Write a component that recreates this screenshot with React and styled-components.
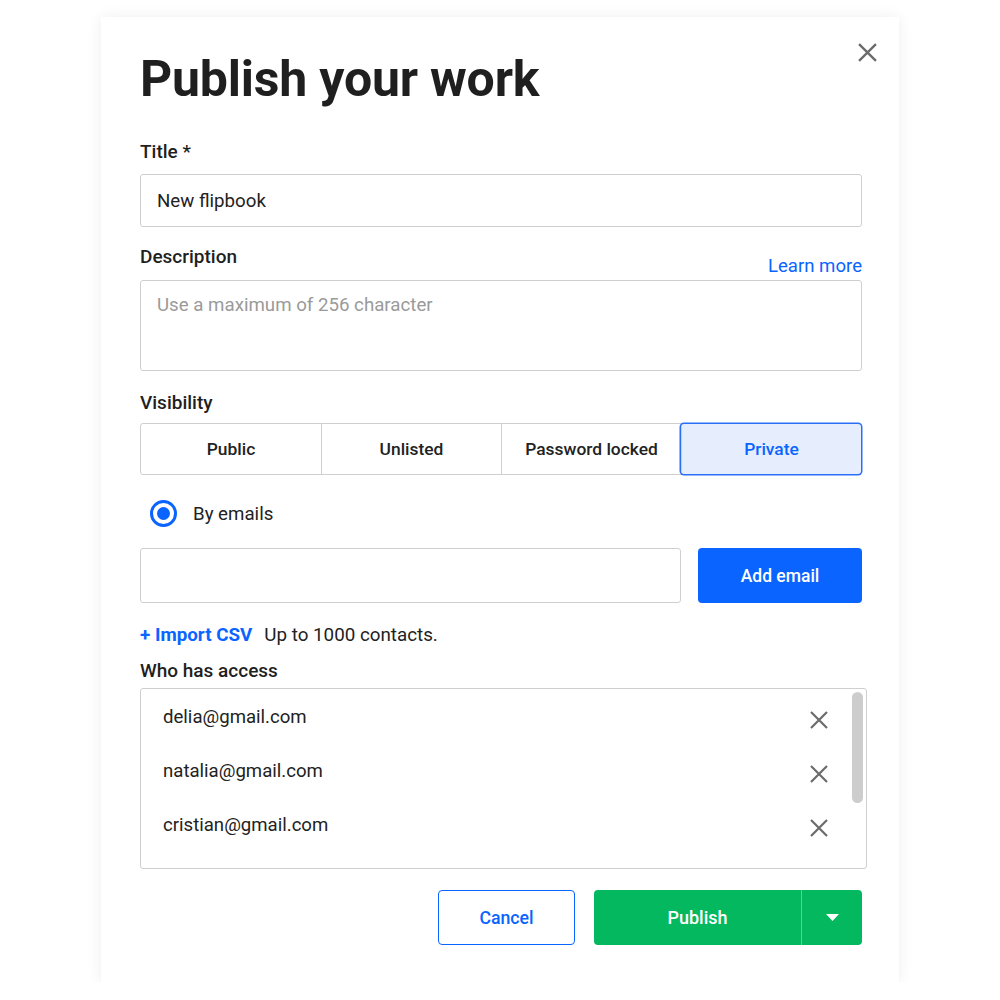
import React from "react";
import styled, { createGlobalStyle } from "styled-components";

const Global = createGlobalStyle`
  html, body { margin: 0; padding: 0; background: #ffffff; }
  body { font-family: Roboto, "Noto Sans", "Liberation Sans", sans-serif; color: #222; }
  * { box-sizing: border-box; }
`;

const BLUE = "#0a64ff";

const Page = styled.div`
  width: 1000px;
  display: flex;
  justify-content: center;
  padding-top: 17px;
`;

const Modal = styled.div`
  position: relative;
  width: 798px;
  height: 966px;
  background: #fff;
  box-shadow: 0 0 14px rgba(0, 0, 0, 0.07);
  padding: 35px 37px 0 39px;
  display: flex;
  flex-direction: column;
`;

const CloseButton = styled.button`
  position: absolute;
  top: 24px;
  right: 21px;
  width: 22px;
  height: 22px;
  padding: 0;
  border: none;
  background: none;
  display: flex;
  align-items: center;
  justify-content: center;
`;

const Heading = styled.h1`
  margin: 0;
  font-size: 50px;
  line-height: 55px;
  font-weight: 700;
  color: #1f1f1f;
  letter-spacing: -0.2px;
`;

const Label = styled.div`
  font-size: 19px;
  line-height: 24px;
  font-weight: 500;
  color: #1f1f1f;
  margin-top: ${(p) => p.$mt || 0}px;
  margin-bottom: ${(p) => (p.$mb === undefined ? 10 : p.$mb)}px;
`;

const TextInput = styled.div`
  height: ${(p) => p.$h || 53}px;
  width: ${(p) => (p.$w ? p.$w + "px" : "100%")};
  border: 1.5px solid #cfcfcf;
  border-radius: 3px;
  padding: ${(p) => (p.$top ? "12px 16px" : "0 16px")};
  display: flex;
  align-items: ${(p) => (p.$top ? "flex-start" : "center")};
  font-size: 18.7px;
  line-height: 24px;
  color: ${(p) => (p.$placeholder ? "#9a9a9a" : "#222")};
  flex-shrink: 0;
`;

const DescRow = styled.div`
  margin-top: 18px;
  display: flex;
  justify-content: space-between;
  align-items: flex-end;
  margin-bottom: 2px;
`;

const Link = styled.a`
  font-size: 18.6px;
  line-height: 24px;
  color: ${BLUE};
  text-decoration: none;
`;

const Segmented = styled.div`
  display: grid;
  grid-template-columns: repeat(4, 1fr);
  height: 52px;
  border: 1px solid #cfcfcf;
  border-radius: 3px;
`;

const Segment = styled.div`
  display: flex;
  align-items: center;
  justify-content: center;
  font-size: 17.4px;
  font-weight: 500;
  color: ${(p) => (p.$active ? BLUE : "#222")};
  background: ${(p) => (p.$active ? "#e6eefe" : "transparent")};
  border-left: ${(p) => (p.$first ? "none" : "1px solid #cfcfcf")};
  box-shadow: ${(p) => (p.$active ? `0 0 0 1.5px #2a6ff5` : "none")};
  border-radius: ${(p) => (p.$active ? "3px" : "0")};
  position: relative;
`;

const RadioRow = styled.label`
  display: flex;
  align-items: center;
  gap: 16px;
  margin: 25px 0 0 10px;
  font-size: 18.7px;
  line-height: 24px;
  color: #222;
`;

const Radio = styled.span`
  width: 27px;
  height: 27px;
  border-radius: 50%;
  border: 3.5px solid ${BLUE};
  display: flex;
  align-items: center;
  justify-content: center;
  &::after {
    content: "";
    width: 13px;
    height: 13px;
    border-radius: 50%;
    background: ${BLUE};
  }
`;

const EmailRow = styled.div`
  margin-top: 21px;
  display: flex;
  gap: 17px;
`;

const PrimaryButton = styled.button`
  flex: 1;
  height: 55px;
  border: none;
  border-radius: 4px;
  background: ${BLUE};
  color: #fff;
  font-family: inherit;
  font-size: 17.5px;
  font-weight: 500;
`;

const ImportRow = styled.div`
  margin-top: 20px;
  display: flex;
  gap: 12px;
  font-size: 18.8px;
  line-height: 24px;
  color: #222;
`;

const ImportLink = styled.span`
  color: ${BLUE};
  font-weight: 700;
`;

const AccessList = styled.div`
  position: relative;
  height: 181px;
  margin-right: -5px;
  border: 1.5px solid #cfcfcf;
  border-radius: 3px;
  padding-top: 1px;
  overflow: hidden;
`;

const AccessItem = styled.div`
  height: 54px;
  display: flex;
  align-items: center;
  justify-content: space-between;
  padding: 0 36px 0 22px;
  font-size: 18.6px;
  line-height: 24px;
  color: #222;
`;

const RemoveButton = styled.button`
  width: 22px;
  height: 22px;
  padding: 0;
  border: none;
  background: none;
  display: flex;
  align-items: center;
  justify-content: center;
  margin-top: 6px;
`;

const ScrollThumb = styled.div`
  position: absolute;
  top: 3px;
  right: 3px;
  width: 11px;
  height: 111px;
  border-radius: 6px;
  background: #cdcdcd;
`;

const Footer = styled.div`
  margin-top: 21px;
  display: flex;
  justify-content: flex-end;
  gap: 19px;
`;

const CancelButton = styled.button`
  width: 137px;
  height: 55px;
  border: 1.5px solid ${BLUE};
  border-radius: 4px;
  background: #fff;
  color: ${BLUE};
  font-family: inherit;
  font-size: 17.7px;
  font-weight: 500;
`;

const SplitButton = styled.div`
  width: 268px;
  height: 55px;
  display: flex;
  border-radius: 4px;
  background: #03b85e;
  overflow: hidden;
`;

const SplitMain = styled.button`
  flex: 1;
  border: none;
  background: transparent;
  color: #fff;
  font-family: inherit;
  font-size: 18px;
  font-weight: 500;
  border-right: 1px solid rgba(255, 255, 255, 0.35);
`;

const SplitCaret = styled.button`
  width: 60px;
  border: none;
  background: transparent;
  display: flex;
  align-items: center;
  justify-content: center;
  padding: 0;
`;

const XIcon = ({ size = 18, color = "#6b6b6b", stroke = 2.2 }) => (
  <svg width={size} height={size} viewBox="0 0 18 18">
    <path d="M1 1 L17 17 M17 1 L1 17" stroke={color} strokeWidth={stroke} strokeLinecap="butt" fill="none" />
  </svg>
);

const emails = ["delia@gmail.com", "natalia@gmail.com", "cristian@gmail.com"];
const options = ["Public", "Unlisted", "Password locked", "Private"];

export default function App() {
  return (
    <>
      <Global />
      <Page>
        <Modal>
          <CloseButton aria-label="Close">
            <XIcon size={19} color="#6a6a6a" stroke={2.2} />
          </CloseButton>
          <Heading>Publish your work</Heading>

          <Label $mt={33}>Title *</Label>
          <TextInput>New flipbook</TextInput>

          <DescRow>
            <Label $mb={9}>Description</Label>
            <Link href="#">Learn more</Link>
          </DescRow>
          <TextInput $h={91} $top $placeholder>
            Use a maximum of 256 character
          </TextInput>

          <Label $mt={20} $mb={8}>Visibility</Label>
          <Segmented>
            {options.map((o, i) => (
              <Segment key={o} $first={i === 0} $active={o === "Private"}>
                {o}
              </Segment>
            ))}
          </Segmented>

          <RadioRow>
            <Radio />
            By emails
          </RadioRow>

          <EmailRow>
            <TextInput $w={541} $h={55} />
            <PrimaryButton>Add email</PrimaryButton>
          </EmailRow>

          <ImportRow>
            <ImportLink>+ Import CSV</ImportLink>
            <span>Up to 1000 contacts.</span>
          </ImportRow>

          <Label $mt={12} $mb={5}>Who has access</Label>
          <AccessList>
            {emails.map((e) => (
              <AccessItem key={e}>
                <span>{e}</span>
                <RemoveButton aria-label={`Remove ${e}`}>
                  <XIcon size={18} color="#6b6b6b" stroke={2.2} />
                </RemoveButton>
              </AccessItem>
            ))}
            <ScrollThumb />
          </AccessList>

          <Footer>
            <CancelButton>Cancel</CancelButton>
            <SplitButton>
              <SplitMain>Publish</SplitMain>
              <SplitCaret aria-label="More options">
                <svg width="13" height="7" viewBox="0 0 13 7">
                  <path d="M0 0 H13 L6.5 7 Z" fill="#fff" />
                </svg>
              </SplitCaret>
            </SplitButton>
          </Footer>
        </Modal>
      </Page>
    </>
  );
}
